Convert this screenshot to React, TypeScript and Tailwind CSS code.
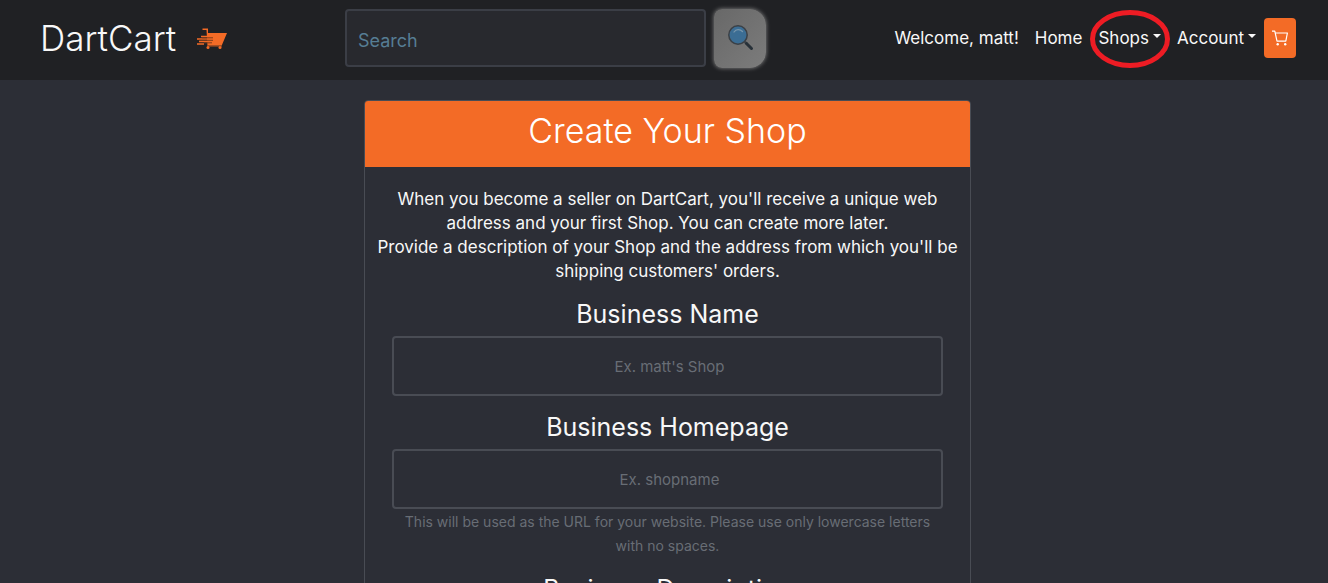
import React from "react";

function Logo() {
  return (
    <svg width="32" height="24" viewBox="0 0 32 24" aria-hidden="true">
      <path d="M6.500 2.500h5.500v4.500h19l-5.500 13h-14l-1-16H6.500z" fill="#f36b26" />
      <path d="M11 20h15" stroke="#8a4522" strokeWidth="1.500" />
      <path d="M1 13h12M3 15.500h12M1 18h7M5 10.500h9" stroke="#f36b26" strokeWidth="1.500" />
      <path d="M6 11.800h11M3 14.300h14M8 16.800h8" stroke="#7c3c1c" strokeWidth="1" />
      <circle cx="12" cy="21.500" r="1.500" fill="#f36b26" />
      <circle cx="24" cy="21.500" r="1.500" fill="#f36b26" />
    </svg>
  );
}

function Magnifier() {
  return (
    <svg width="28" height="28" viewBox="0 0 28 28" aria-hidden="true">
      <path d="M17 17l3 3" stroke="#454b50" strokeWidth="2.500" />
      <path d="M19.500 19.500l5 5" stroke="#273038" strokeWidth="3" strokeLinecap="round" />
      <circle cx="11" cy="11" r="9.200" fill="#3b6d94" stroke="#3b4046" strokeWidth="1.500" />
      <path d="M7 8c2-3 6-3 8.500-.5" fill="none" stroke="#7695ab" strokeWidth="1.300" strokeLinecap="round" />
    </svg>
  );
}

function CartIcon() {
  return (
    <svg width="16" height="16" viewBox="0 0 16 16" fill="none" stroke="#fff" strokeWidth="1.200" aria-hidden="true">
      <path d="M0 1.200h2.800l2.200 10h8.800l1.600-8.200H3.300" strokeLinejoin="round" />
      <circle cx="5.700" cy="14.200" r="1.200" fill="#fff" stroke="none" />
      <circle cx="13.200" cy="14.200" r="1.200" fill="#fff" stroke="none" />
    </svg>
  );
}

function Caret() {
  return (
    <svg className="mb-1" width="8" height="4" viewBox="0 0 8 4" aria-hidden="true">
      <path d="M0 0h8L4 4z" fill="currentColor" />
    </svg>
  );
}

function Header() {
  return (
    <header className="grid h-20 grid-cols-[345px_1fr_auto] items-center bg-[#202124] pr-8 pb-1">
      <a href="#" className="flex items-center gap-5 pl-10 text-[35px] leading-10 font-light">
        DartCart
        <Logo />
      </a>
      <form className="flex items-center gap-2" onSubmit={(e) => e.preventDefault()}>
        <input
          type="search"
          aria-label="Search"
          placeholder="Search"
          className="h-[58px] w-[361px] rounded border-2 border-[#3b3e46] bg-[#28292e] px-[11px] pt-1 text-lg outline-none placeholder:text-[#567d94]"
        />
        <button
          type="submit"
          aria-label="Submit search"
          className="flex h-[59px] w-[52px] items-center justify-center rounded-l-lg rounded-r-2xl bg-linear-to-br from-[#686868] to-[#7c7c7c] pl-0.5 shadow-[0_0_4px_#888888]"
        >
          <Magnifier />
        </button>
      </form>
      <nav className="flex items-center gap-4 text-[17px] leading-6">
        <span>Welcome, matt!</span>
        <a href="#">Home</a>
        <button type="button" className="relative flex items-center gap-1">
          Shops
          <Caret />
          <svg
            className="pointer-events-none absolute -top-4 -left-2 h-[58px] w-20"
            viewBox="0 0 80 58"
            aria-hidden="true"
          >
            <ellipse cx="40" cy="29" rx="37.500" ry="26.500" fill="none" stroke="#ed1c24" strokeWidth="5" />
          </svg>
        </button>
        <button type="button" className="flex items-center gap-1">
          Account
          <Caret />
        </button>
        <a
          href="#"
          aria-label="Cart"
          className="-ml-2 flex h-10 w-8 items-center justify-center rounded bg-[#f36b26]"
        >
          <CartIcon />
        </a>
      </nav>
    </header>
  );
}

type FieldProps = { id: string; label: string; placeholder: string; hint?: string };

function Field({ id, label, placeholder, hint }: FieldProps) {
  return (
    <div className="px-3">
      <label htmlFor={id} className="mb-2 block text-[25px] leading-7">
        {label}
      </label>
      <input
        id={id}
        placeholder={placeholder}
        className="block h-[60px] w-full rounded border-2 border-[#494c54] bg-transparent pl-1 text-center text-[15px] outline-none placeholder:text-[#686d75]"
      />
      {hint && <p className="pt-px text-sm leading-6 text-[#686d75]">{hint}</p>}
    </div>
  );
}

export default function App() {
  return (
    <div className="min-h-screen bg-[#2c2e36] font-['Inter',sans-serif] text-[#f8f8f8]">
      <Header />
      <div className="pt-5 pl-[7px]">
        <main className="mx-auto max-w-[607px] overflow-hidden rounded border border-[#494c54] text-center">
          <h1 className="bg-[#f36b26] pt-[11px] pb-[17px] text-[34px] leading-[38px] font-light text-white">
            Create Your Shop
          </h1>
          <div className="px-[15px] pt-5">
            <p className="-mx-2 text-[17px] leading-6">
              When you become a seller on DartCart, you'll receive a unique web address and your first Shop. You can
              create more later.
              <br />
              Provide a description of your Shop and the address from which you'll be shipping customers' orders.
            </p>
            <form className="flex flex-col gap-[17px] pt-[17px]">
              <Field id="name" label="Business Name" placeholder="Ex. matt's Shop" />
              <Field
                id="homepage"
                label="Business Homepage"
                placeholder="Ex. shopname"
                hint="This will be used as the URL for your website. Please use only lowercase letters with no spaces."
              />
              <Field id="description" label="Business Description" placeholder="" />
            </form>
          </div>
        </main>
      </div>
    </div>
  );
}
